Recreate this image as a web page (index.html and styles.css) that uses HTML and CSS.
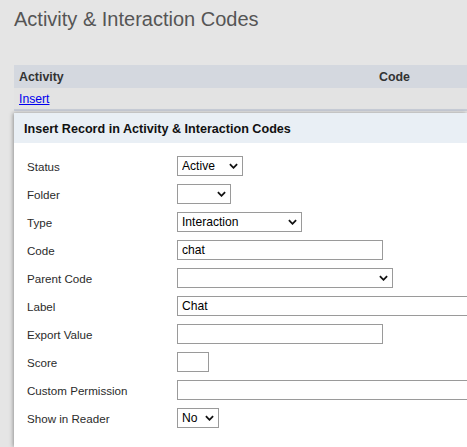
FILE: index.html
```html
<!DOCTYPE html>
<html lang="en">
<head>
<meta charset="utf-8">
<title>Activity &amp; Interaction Codes</title>
<link rel="stylesheet" href="styles.css">
</head>
<body>
<h1 class="page-title">Activity &amp; Interaction Codes</h1>
<div class="list">
  <div class="list-head">
    <div class="col col-activity">Activity</div>
    <div class="col col-code">Code</div>
  </div>
  <div class="list-row">
    <a class="insert-link" href="#">Insert</a>
  </div>
</div>
<div class="dialog">
  <div class="dialog-head">Insert Record in Activity &amp; Interaction Codes</div>
  <div class="dialog-body">
    <div class="field">
      <label class="field-label">Status</label>
      <span class="sel w-status"><select><option>Active</option></select><svg class="chev" viewBox="0 0 10 6" width="9" height="6"><path d="M1 1 L5 5 L9 1" fill="none" stroke="#111" stroke-width="2"/></svg></span>
    </div>
    <div class="field">
      <label class="field-label">Folder</label>
      <span class="sel w-folder"><select><option></option></select><svg class="chev" viewBox="0 0 10 6" width="9" height="6"><path d="M1 1 L5 5 L9 1" fill="none" stroke="#111" stroke-width="2"/></svg></span>
    </div>
    <div class="field">
      <label class="field-label">Type</label>
      <span class="sel w-type"><select><option>Interaction</option></select><svg class="chev" viewBox="0 0 10 6" width="9" height="6"><path d="M1 1 L5 5 L9 1" fill="none" stroke="#111" stroke-width="2"/></svg></span>
    </div>
    <div class="field">
      <label class="field-label">Code</label>
      <input class="txt w-code" type="text" value="chat">
    </div>
    <div class="field">
      <label class="field-label">Parent Code</label>
      <span class="sel w-parent"><select><option></option></select><svg class="chev" viewBox="0 0 10 6" width="9" height="6"><path d="M1 1 L5 5 L9 1" fill="none" stroke="#111" stroke-width="2"/></svg></span>
    </div>
    <div class="field">
      <label class="field-label">Label</label>
      <input class="txt w-full" type="text" value="Chat">
    </div>
    <div class="field">
      <label class="field-label">Export Value</label>
      <input class="txt w-code" type="text" value="">
    </div>
    <div class="field">
      <label class="field-label">Score</label>
      <input class="txt w-score" type="text" value="">
    </div>
    <div class="field">
      <label class="field-label">Custom Permission</label>
      <input class="txt w-full" type="text" value="">
    </div>
    <div class="field">
      <label class="field-label">Show in Reader</label>
      <span class="sel w-show"><select><option>No</option></select><svg class="chev" viewBox="0 0 10 6" width="9" height="6"><path d="M1 1 L5 5 L9 1" fill="none" stroke="#111" stroke-width="2"/></svg></span>
    </div>
  </div>
</div>
</body>
</html>
```
FILE: styles.css
```css
html, body {
  overflow: hidden;
}
body {
  margin: 0;
  background: #e5e5e5;
  font-family: "Liberation Sans", Arial, sans-serif;
  color: #333;
  width: 467px;
  height: 447px;
}
.page-title {
  margin: 7px 0 0 14px;
  font-size: 20px;
  line-height: 24px;
  font-weight: normal;
  color: #555;
}
.list {
  margin: 34px 0 0 14px;
  width: 453px;
}
.list-head {
  display: grid;
  grid-template-columns: 360px 1fr;
  height: 23px;
  align-items: center;
  background: #d4d8df;
  font-weight: bold;
  font-size: 12.4px;
  color: #333;
}
.col {
  padding-left: 5px;
}
.list-row {
  height: 21px;
  display: flex;
  align-items: center;
  padding-left: 5px;
  border-bottom: 2px solid #c9ced8;
  background: #e3e3e3;
}
.insert-link {
  color: #0000ee;
  font-size: 12.2px;
  text-decoration: underline;
}
.dialog {
  margin: 2px 0 0 14px;
  width: 453px;
  background: #fff;
  box-shadow: -1px 0 4px rgba(0, 0, 0, 0.35);
  padding-bottom: 11px;
}
.dialog-head {
  height: 30px;
  box-sizing: border-box;
  padding: 3px 0 0 10px;
  line-height: 27px;
  background: #e9eff5;
  font-weight: bold;
  font-size: 12.6px;
  color: #111;
}
.dialog-body {
  padding: 13px 0 0 13px;
}
.field {
  display: flex;
  align-items: center;
  height: 20px;
  margin-bottom: 8px;
}
.field-label {
  width: 150px;
  flex: none;
  font-size: 11.6px;
  color: #2b2b2b;
}
.sel {
  position: relative;
  display: inline-block;
  height: 20px;
}
.sel select {
  -webkit-appearance: none;
  appearance: none;
  width: 100%;
  height: 20px;
  box-sizing: border-box;
  border: 1px solid #9a9a9a;
  border-radius: 0;
  background: #fff;
  margin: 0;
  padding: 0 0 0 4px;
  font-family: "Liberation Sans", Arial, sans-serif;
  font-size: 12.1px;
  color: #000;
  outline: none;
}
.chev {
  position: absolute;
  right: 5px;
  top: 7px;
}
.txt {
  height: 20px;
  box-sizing: border-box;
  border: 1px solid #9a9a9a;
  border-radius: 0;
  margin: 0;
  padding: 0 0 0 4px;
  font-family: "Liberation Sans", Arial, sans-serif;
  font-size: 12.1px;
  color: #000;
  background: #fff;
  outline: none;
}
.w-status { width: 66px; }
.w-folder { width: 54px; }
.w-type { width: 125px; }
.w-code { width: 206px; }
.w-parent { width: 216px; }
.w-full { width: 290px; border-right: none; }
.w-score { width: 32px; }
.w-show { width: 42px; }
```
